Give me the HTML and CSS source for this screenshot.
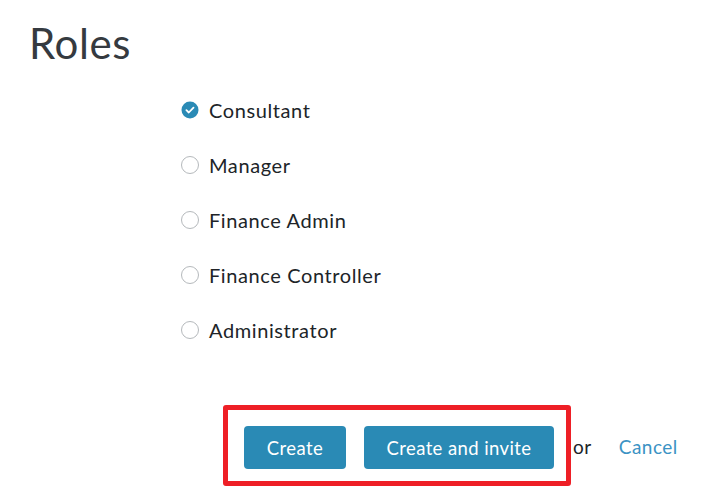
FILE: index.html
```html
<!DOCTYPE html>
<html lang="en">
<head>
    <meta charset="UTF-8">
    <meta name="viewport" content="width=device-width, initial-scale=1.0">
    <title>Roles</title>
    <link rel="stylesheet" href="styles.css">
</head>
<body>
    <h1 class="page-title">Roles</h1>

    <div class="role-list">
        <label class="role">
            <span class="radio checked">
                <svg viewBox="0 0 18 18" width="18" height="18">
                    <circle cx="9" cy="9" r="8.5" fill="#2a8ab5"/>
                    <path d="M5.4 9.2 L7.8 11.5 L12.5 6.6" fill="none" stroke="#fff" stroke-width="1.8" stroke-linecap="round" stroke-linejoin="round"/>
                </svg>
            </span>
            Consultant
        </label>
        <label class="role">
            <span class="radio"></span>
            Manager
        </label>
        <label class="role">
            <span class="radio"></span>
            Finance Admin
        </label>
        <label class="role">
            <span class="radio"></span>
            Finance Controller
        </label>
        <label class="role">
            <span class="radio"></span>
            Administrator
        </label>
    </div>

    <div class="actions">
        <div class="button-group">
            <!-- highlight box drawn over the buttons -->
            <span class="highlight"></span>
            <button class="btn">Create</button>
            <button class="btn">Create and invite</button>
        </div>
        <span class="or">or</span>
        <a class="cancel" href="#">Cancel</a>
    </div>
</body>
</html>
```

FILE: styles.css
```css
:root {
    --blue: #2a8ab5;
    --link: #3b93c4;
    --text: #202428;
    --title: #353a40;
}

html, body {
    min-height: 100%;
}

body {
    margin: 0;
    padding: 0 0 40px;
    font-family: 'Lato', 'Open Sans', sans-serif;
    color: var(--text);
    background: #ffffff;
}

.page-title {
    margin: 0;
    padding: 18px 0 0 29px;
    height: 64px;
    font-size: 42px;
    font-weight: 400;
    line-height: 50px;
    letter-spacing: 0.6px;
    color: var(--title);
}

.role-list {
    display: flex;
    flex-direction: column;
    padding-left: 181px;
}

.role {
    display: flex;
    align-items: center;
    height: 55px;
    font-size: 20px;
    letter-spacing: 0.6px;
    gap: 10px;
}

.role-text {
    padding-bottom: 2px;
}

.radio {
    width: 16px;
    height: 16px;
    border: 1px solid #b5b9bc;
    border-radius: 50%;
    box-sizing: content-box;
    flex-shrink: 0;
}

.radio.checked {
    border: none;
    width: 18px;
    height: 18px;
}

.radio svg {
    display: block;
}

.actions {
    display: flex;
    align-items: center;
    margin-top: 69px;
    padding-left: 244px;
    font-size: 19px;
    letter-spacing: 0.5px;
}

.button-group {
    position: relative;
    display: flex;
    gap: 18px;
}

.highlight {
    position: absolute;
    left: -21px;
    top: -21px;
    width: 348px;
    height: 81px;
    border: 5px solid #ee1f26;
    border-radius: 3px;
    box-sizing: border-box;
    z-index: 2;
}

.btn {
    height: 43px;
    padding: 0;
    border: none;
    border-radius: 4px;
    background: var(--blue);
    color: #ffffff;
    font-family: inherit;
    font-size: 18.5px;
    letter-spacing: 0.4px;
}

.btn:first-of-type {
    width: 102px;
}

.btn:last-of-type {
    width: 190px;
}

.or {
    margin-left: 19px;
    padding-bottom: 3px;
}

.cancel {
    margin-left: 27px;
    padding-bottom: 3px;
    color: var(--link);
    text-decoration: none;
}
```
